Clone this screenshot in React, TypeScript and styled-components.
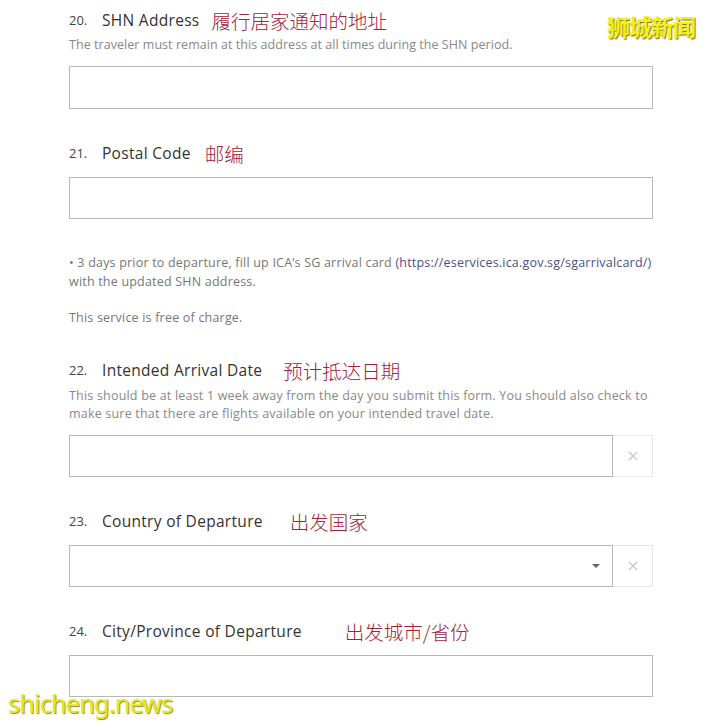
import React from 'react';
import styled, { createGlobalStyle } from 'styled-components';

const GlobalStyle = createGlobalStyle`
  html, body {
    margin: 0;
    padding: 0;
    background: #fff;
  }
  body {
    font-family: "Open Sans", "Noto Sans", "Noto Sans CJK SC", sans-serif;
  }
`;

const Page = styled.div`
  position: relative;
  width: 717px;
  height: 723px;
  overflow: hidden;
  box-sizing: border-box;
  padding: 8px 64px 0 69px;
  background: #fff;
`;

const Field = styled.section<{ $top?: number }>`
  margin-top: ${({ $top }) => $top ?? 32}px;
`;

const LabelRow = styled.div`
  display: flex;
  align-items: center;
  height: 24px;
  color: #333;
`;

const Num = styled.span`
  width: 33px;
  font-size: 13px;
  color: #444;
`;

const Label = styled.span`
  font-size: 15.5px;
  letter-spacing: 0.3px;
  color: #333;
`;

const Note = styled.span<{ $gap: number }>`
  margin-left: ${({ $gap }) => $gap}px;
  margin-top: 1px;
  font-family: "Noto Sans CJK SC", sans-serif;
  font-size: 19.5px;
  font-weight: 300;
  color: #a0243c;
`;

const Help = styled.p<{ $top?: number; $ls?: number }>`
  margin: ${({ $top }) => $top ?? 4}px 0 0;
  font-size: 12.5px;
  line-height: 18px;
  letter-spacing: ${({ $ls }) => $ls ?? 0.05}px;
  color: #888;
`;

const Row = styled.div`
  display: flex;
  margin-top: 12px;
`;

const Input = styled.div<{ $h?: number }>`
  position: relative;
  flex: 1;
  height: ${({ $h }) => $h ?? 42}px;
  border: 1px solid #b8b8b8;
  box-sizing: border-box;
  background: #fff;
`;

const Caret = styled.span`
  position: absolute;
  right: 12px;
  top: 50%;
  margin-top: -2px;
  width: 0;
  height: 0;
  border-left: 4px solid transparent;
  border-right: 4px solid transparent;
  border-top: 4px solid #666;
`;

const Clear = styled.div`
  width: 40px;
  display: flex;
  align-items: center;
  justify-content: center;
  border: 1px solid #e6e6e6;
  border-left: none;
  box-sizing: border-box;
`;

const Notes = styled.div`
  margin-top: 34px;
  font-size: 12.5px;
  letter-spacing: 0.2px;
  line-height: 19px;
  color: #777;
`;

const NoteLine = styled.p<{ $top?: number }>`
  margin: ${({ $top }) => $top ?? 0}px 0 0;
  white-space: nowrap;
`;

const Link = styled.span`
  color: #4b4f8c;
`;

const MarkTop = styled.div`
  position: absolute;
  top: 9px;
  left: 607px;
  font-family: "Noto Sans CJK SC", sans-serif;
  font-size: 23px;
  font-weight: 700;
  color: #f3f01a;
  text-shadow: 1px 1px 1px #7a6a20;
  letter-spacing: -1px;
`;

const MarkBottom = styled.div`
  position: absolute;
  left: 8px;
  top: 686px;
  font-family: "Noto Sans", sans-serif;
  font-size: 25px;
  color: #e8e81c;
  text-shadow: 1px 1px 1px #8a8a30;
  letter-spacing: -0.7px;
`;

const X = () => (
  <svg width="10" height="10" viewBox="0 0 10 10">
    <path d="M1 1L9 9M9 1L1 9" stroke="#c4c4c4" strokeWidth="1.1" />
  </svg>
);

const Head = ({ n, label, note, gap }: { n: string; label: string; note: string; gap: number }) => (
  <LabelRow>
    <Num>{n}</Num>
    <Label>{label}</Label>
    <Note $gap={gap}>{note}</Note>
  </LabelRow>
);

export default function App() {
  return (
    <Page>
      <GlobalStyle />
      <Field $top={0}>
        <Head n="20." label="SHN Address" note="履行居家通知的地址" gap={12} />
        <Help>The traveler must remain at this address at all times during the SHN period.</Help>
        <Row>
          <Input $h={43} />
        </Row>
      </Field>

      <Field>
        <Head n="21." label="Postal Code" note="邮编" gap={14} />
        <Row>
          <Input />
        </Row>
      </Field>

      <Notes>
        <NoteLine>
          • 3 days prior to departure, fill up ICA’s SG arrival card{' '}
          <Link>(https://eservices.ica.gov.sg/sgarrivalcard/)</Link>
          <br />
          with the updated SHN address.
        </NoteLine>
        <NoteLine $top={17}>This service is free of charge.</NoteLine>
      </Notes>

      <Field $top={31}>
        <Head n="22." label="Intended Arrival Date" note="预计抵达日期" gap={21} />
        <Help $top={5} $ls={0.2}>
          This should be at least 1 week away from the day you submit this form. You should also check to make
          sure that there are flights available on your intended travel date.
        </Help>
        <Row>
          <Input />
          <Clear>
            <X />
          </Clear>
        </Row>
      </Field>

      <Field>
        <Head n="23." label="Country of Departure" note="出发国家" gap={27} />
        <Row>
          <Input>
            <Caret />
          </Input>
          <Clear>
            <X />
          </Clear>
        </Row>
      </Field>

      <Field>
        <Head n="24." label="City/Province of Departure" note="出发城市/省份" gap={43} />
        <Row>
          <Input />
        </Row>
      </Field>

      <MarkTop>狮城新闻</MarkTop>
      <MarkBottom>shicheng.news</MarkBottom>
    </Page>
  );
}
